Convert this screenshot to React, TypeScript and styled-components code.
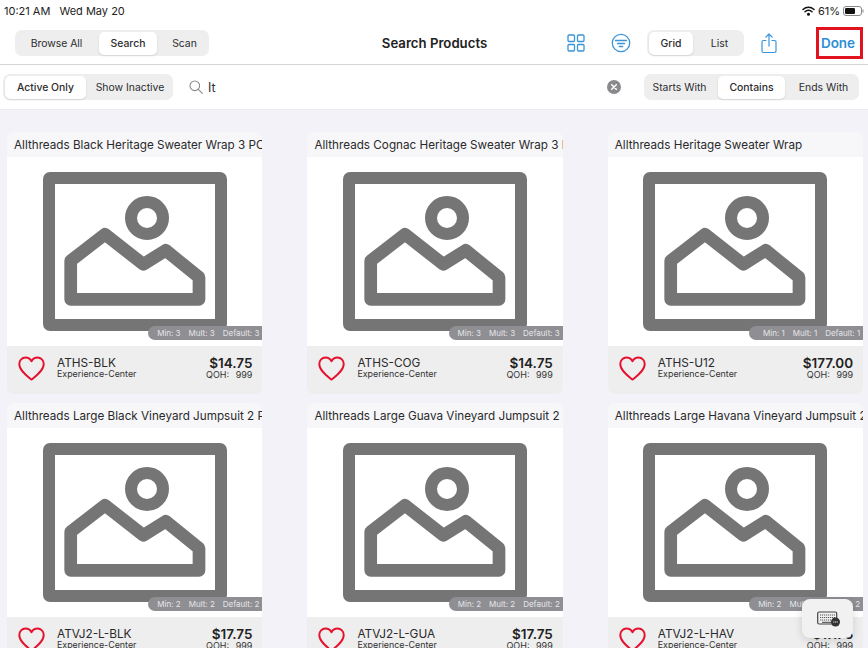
import React from 'react';
import styled, { createGlobalStyle } from 'styled-components';

const GlobalStyle = createGlobalStyle`
    html, body {
        margin: 0;
        padding: 0;
        height: 648px;
        overflow: hidden;
        background-color: #f2f2f8;
        font-family: Inter, "Liberation Sans", sans-serif;
        color: #1c1c1e;
    }
`;

const Page = styled.div`
    position: relative;
    width: 868px;
    height: 648px;
    overflow: hidden;
`;

const Top = styled.div`
    background-color: #fff;
`;

const StatusBar = styled.div`
    display: flex;
    justify-content: space-between;
    align-items: center;
    height: 22px;
    padding: 0 4px;
    font-size: 11px;
    color: #222;
`;

const StatusLeft = styled.div`
    display: flex;
    gap: 9px;
`;

const StatusRight = styled.div`
    display: flex;
    align-items: center;
    gap: 3px;
`;

const Toolbar = styled.div`
    display: grid;
    grid-template-columns: 1fr auto 1fr;
    align-items: center;
    height: 42px;
    padding: 0 5px;
    border-bottom: 1px solid #d4d4d6;
`;

const Title = styled.div`
    font-size: 13.2px;
    font-weight: 600;
    color: #222;
    padding-left: 1px;
`;

const Actions = styled.div`
    display: flex;
    align-items: center;
    justify-content: flex-end;
`;

const IconSlot = styled.div<{ $ml: number }>`
    display: flex;
    margin-left: ${props => props.$ml}px;
`;

const Segments = styled.div<{ $ml?: number }>`
    display: flex;
    align-items: center;
    height: 26px;
    padding: 0 2px;
    border-radius: 7px;
    background-color: #eeeeef;
    margin-left: ${props => props.$ml || 0}px;
    flex-shrink: 0;
    justify-self: start;
`;

const Segment = styled.div<{ $active?: boolean; $w: number; $nudge?: number }>`
    display: flex;
    align-items: center;
    justify-content: center;
    box-sizing: border-box;
    width: ${props => props.$w}px;
    height: 23px;
    padding-left: ${props => Math.max(props.$nudge || 0, 0)}px;
    padding-right: ${props => Math.max(-(props.$nudge || 0), 0)}px;
    border-radius: 5px;
    font-size: 10.4px;
    font-weight: ${props => props.$active ? 500 : 400};
    white-space: nowrap;
    color: #2c2c2e;
    background-color: ${props => props.$active ? '#fff' : 'transparent'};
    box-shadow: ${props => props.$active ? '0 1px 2px rgba(0, 0, 0, .12)' : 'none'};
`;

const DoneBtn = styled.div`
    display: flex;
    align-items: center;
    justify-content: center;
    width: 47px;
    height: 32px;
    box-sizing: border-box;
    margin-left: 39px;
    padding-right: 3px;
    border: 3px solid #e2121f;
    font-size: 13.5px;
    font-weight: 600;
    color: #2f8ed6;
`;

const FilterRow = styled.div`
    display: flex;
    align-items: center;
    height: 44px;
    padding: 0 9px 0 3px;
    border-bottom: 1px solid #ececf0;
`;

const SearchBox = styled.div`
    display: flex;
    flex: 1;
    align-items: center;
    padding: 0 23px 0 16px;
`;

const SearchText = styled.div`
    flex: 1;
    margin-left: 5px;
    font-size: 12.5px;
    color: #333;
`;

const Grid = styled.div`
    display: grid;
    grid-template-columns: repeat(3, 255.4px);
    column-gap: 45px;
    row-gap: 9px;
    padding: 22px 0 0 7px;
`;

const Card = styled.div`
    height: 262px;
    border-radius: 7px;
    overflow: hidden;
    display: flex;
    flex-direction: column;
`;

const CardTitle = styled.div`
    height: 25px;
    line-height: 27px;
    padding-left: 7px;
    font-size: 11.7px;
    white-space: nowrap;
    overflow: hidden;
    background-color: #f7f7f9;
    color: #2a2a2c;
`;

const ImageArea = styled.div`
    position: relative;
    height: 189px;
    background-color: #fff;
    display: flex;
    justify-content: center;
    padding-top: 15px;
    box-sizing: border-box;
`;

const Badge = styled.div`
    position: absolute;
    right: 0;
    bottom: 6px;
    display: flex;
    justify-content: flex-end;
    gap: 8px;
    width: 114px;
    box-sizing: border-box;
    height: 14px;
    line-height: 14px;
    padding-right: 3px;
    border-radius: 7px 0 0 7px;
    background-color: #8e8e93;
    color: #e6e6e8;
    font-size: 8px;
    white-space: nowrap;
`;

const CardFooter = styled.div`
    flex: 1;
    display: flex;
    align-items: center;
    padding: 0 10px 4px 11px;
    background-color: #eeeeee;
`;

const Info = styled.div`
    flex: 1;
    margin-left: 12px;
`;

const Sku = styled.div`
    font-size: 11.8px;
    line-height: 12px;
    color: #2a2a2c;
`;

const Location = styled.div`
    font-size: 8.9px;
    line-height: 10px;
    color: #333;
`;

const PriceCol = styled.div`
    text-align: right;
`;

const Price = styled.div`
    font-size: 13.5px;
    line-height: 14px;
    font-weight: 600;
    color: #222;
`;

const Qoh = styled.div`
    font-size: 9px;
    line-height: 10px;
    color: #333;
    word-spacing: 4px;
`;

const KeyboardBtn = styled.div`
    position: absolute;
    left: 802px;
    top: 599px;
    width: 51px;
    height: 39px;
    padding-left: 3px;
    box-sizing: border-box;
    display: flex;
    align-items: center;
    justify-content: center;
    border-radius: 8px;
    background-color: #f1f1f2;
    box-shadow: 0 2px 8px rgba(0, 0, 0, .14);
`;

const BLUE = '#3a94d8';

const Placeholder = () => (
    <svg width={184} height={159} viewBox="0 0 184 159" fill="none" stroke="#757575">
        <rect x={6} y={6} width={172} height={147} rx={1} strokeWidth={12} strokeLinejoin="round" />
        <circle cx={104} cy={46} r={16} strokeWidth={12} />
        <path d="M27.7 127.3V88.7L62 62.3l38.3 30 22.4-14 33.3 27v22z" strokeWidth={12.7} strokeLinejoin="round" />
    </svg>
);

const Heart = () => (
    <svg width={27} height={25} viewBox="0 0 29 27" fill="none" stroke="#e5122e" strokeWidth={2.1} strokeLinejoin="round">
        <path d="M14.5 25.5C9 21 1.3 15.5 1.3 8.6 1.3 4.6 4.3 1.6 8 1.6c2.800 0 5.100 1.500 6.500 4 1.400-2.500 3.700-4 6.500-4 3.700 0 6.700 3 6.700 7 0 6.900-7.700 12.400-13.200 16.900z" />
    </svg>
);

const GridIcon = () => (
    <svg width={18} height={18} viewBox="0 0 18 18" fill="none" stroke={BLUE} strokeWidth={1.3}>
        <rect x={1} y={1} width={6.500} height={6.500} rx={1} />
        <rect x={10.500} y={1} width={6.500} height={6.500} rx={1} />
        <rect x={1} y={10.500} width={6.500} height={6.500} rx={1} />
        <rect x={10.500} y={10.500} width={6.500} height={6.500} rx={1} />
    </svg>
);

const FilterIcon = () => (
    <svg width={20} height={20} viewBox="0 0 20 20" fill="none" stroke={BLUE} strokeWidth={1.3} strokeLinecap="round">
        <circle cx={10} cy={10} r={8.700} />
        <path d="M4.500 7.500h11M6.500 10.500h7M8.300 13.500h3.400" />
    </svg>
);

const ShareIcon = () => (
    <svg width={16} height={21} viewBox="0 0 16 21" fill="none" stroke={BLUE} strokeWidth={1.2} strokeLinecap="round" strokeLinejoin="round">
        <path d="M5 7.500H2.500a1.500 1.500 0 0 0-1.500 1.500v9a1.500 1.500 0 0 0 1.500 1.500h11a1.500 1.500 0 0 0 1.500-1.500V9a1.500 1.500 0 0 0-1.500-1.500H11" />
        <path d="M8 13V1M4.800 4.200 8 1l3.200 3.200" />
    </svg>
);

const SearchIcon = () => (
    <svg width={14} height={14} viewBox="0 0 14 14" fill="none" stroke="#8a8a8e" strokeWidth={1.1} strokeLinecap="round">
        <circle cx={5.800} cy={5.800} r={4.800} />
        <path d="M9.300 9.300 13.300 13.300" />
    </svg>
);

const ClearIcon = () => (
    <svg width={14} height={14} viewBox="0 0 14 14">
        <circle cx={7} cy={7} r={7} fill="#8a8a8e" />
        <path d="M4.700 4.700l4.600 4.600M9.300 4.700l-4.600 4.600" stroke="#fff" strokeWidth={1.500} strokeLinecap="round" />
    </svg>
);

const WifiIcon = () => (
    <svg width={13} height={10} viewBox="0 0 13 10" fill="none" stroke="#111" strokeWidth={1.500} strokeLinecap="round">
        <path d="M1 3.500C4.200.500 8.800.500 12 3.500M3 5.700c2-1.800 5-1.800 7 0" />
        <circle cx={6.500} cy={8.300} r={.800} fill="#111" />
    </svg>
);

const BatteryIcon = () => (
    <svg width={21} height={10} viewBox="0 0 21 10">
        <rect x={.500} y={.500} width={18} height={9} rx={2.500} fill="none" stroke="#888" />
        <rect x={2} y={2} width={10} height={6} rx={1.200} fill="#111" />
        <rect x={19.500} y={3.500} width={1} height={3} fill="#888" />
    </svg>
);

const KeyboardIcon = () => (
    <svg width={24} height={16} viewBox="0 0 24 16">
        <rect x={.700} y={1} width={19} height={12} rx={1.500} fill="#f1f1f2" stroke="#444" strokeWidth={1.200} />
        <path d="M3 4h15M3 6.500h15M3 9h15" stroke="#555" strokeWidth={1.200} strokeDasharray="1.200 .800" />
        <path d="M5 11.300h11" stroke="#444" strokeWidth={1} />
        <circle cx={18.500} cy={11} r={4.500} fill="#333" />
        <path d="M16.300 11h4.400" stroke="#fff" strokeWidth={1} strokeDasharray="1 .700" />
    </svg>
);

type Product = {
    name: string;
    sku: string;
    price: string;
    qty: number;
};

const products: Product[] = [
    { name: 'Allthreads Black Heritage Sweater Wrap 3 PC', sku: 'ATHS-BLK', price: '$14.75', qty: 3 },
    { name: 'Allthreads Cognac Heritage Sweater Wrap 3 PC', sku: 'ATHS-COG', price: '$14.75', qty: 3 },
    { name: 'Allthreads Heritage Sweater Wrap', sku: 'ATHS-U12', price: '$177.00', qty: 1 },
    { name: 'Allthreads Large Black Vineyard Jumpsuit 2 PC', sku: 'ATVJ2-L-BLK', price: '$17.75', qty: 2 },
    { name: 'Allthreads Large Guava Vineyard Jumpsuit 2 PC', sku: 'ATVJ2-L-GUA', price: '$17.75', qty: 2 },
    { name: 'Allthreads Large Havana Vineyard Jumpsuit 2 PC', sku: 'ATVJ2-L-HAV', price: '$17.75', qty: 2 },
];

const App: React.FC = () => {
    return (
        <Page>
            <GlobalStyle />
            <Top>
                <StatusBar>
                    <StatusLeft>
                        <span>10:21 AM</span>
                        <span>Wed May 20</span>
                    </StatusLeft>
                    <StatusRight>
                        <WifiIcon />
                        <span>61%</span>
                        <BatteryIcon />
                    </StatusRight>
                </StatusBar>
                <Toolbar>
                    <Segments $ml={10}>
                        <Segment $w={82} $nudge={-3}>Browse All</Segment>
                        <Segment $w={58} $active>Search</Segment>
                        <Segment $w={50} $nudge={5}>Scan</Segment>
                    </Segments>
                    <Title>Search Products</Title>
                    <Actions>
                        <GridIcon />
                        <IconSlot $ml={26}><FilterIcon /></IconSlot>
                        <Segments $ml={16}>
                            <Segment $w={44} $active>Grid</Segment>
                            <Segment $w={49} $nudge={4}>List</Segment>
                        </Segments>
                        <IconSlot $ml={17}><ShareIcon /></IconSlot>
                        <DoneBtn>Done</DoneBtn>
                    </Actions>
                </Toolbar>
                <FilterRow>
                    <Segments>
                        <Segment $w={81} $active>Active Only</Segment>
                        <Segment $w={85} $nudge={3}>Show Inactive</Segment>
                    </Segments>
                    <SearchBox>
                        <SearchIcon />
                        <SearchText>It</SearchText>
                        <ClearIcon />
                    </SearchBox>
                    <Segments>
                        <Segment $w={72} $nudge={-5}>Starts With</Segment>
                        <Segment $w={67} $active>Contains</Segment>
                        <Segment $w={72} $nudge={5}>Ends With</Segment>
                    </Segments>
                </FilterRow>
            </Top>
            <Grid>
                {products.map(p => (
                    <Card key={p.sku}>
                        <CardTitle>{p.name}</CardTitle>
                        <ImageArea>
                            <Placeholder />
                            <Badge>
                                <span>Min: {p.qty}</span>
                                <span>Mult: {p.qty}</span>
                                <span>Default: {p.qty}</span>
                            </Badge>
                        </ImageArea>
                        <CardFooter>
                            <Heart />
                            <Info>
                                <Sku>{p.sku}</Sku>
                                <Location>Experience-Center</Location>
                            </Info>
                            <PriceCol>
                                <Price>{p.price}</Price>
                                <Qoh>QOH: 999</Qoh>
                            </PriceCol>
                        </CardFooter>
                    </Card>
                ))}
            </Grid>
            <KeyboardBtn>
                <KeyboardIcon />
            </KeyboardBtn>
        </Page>
    );
};

export default App;
